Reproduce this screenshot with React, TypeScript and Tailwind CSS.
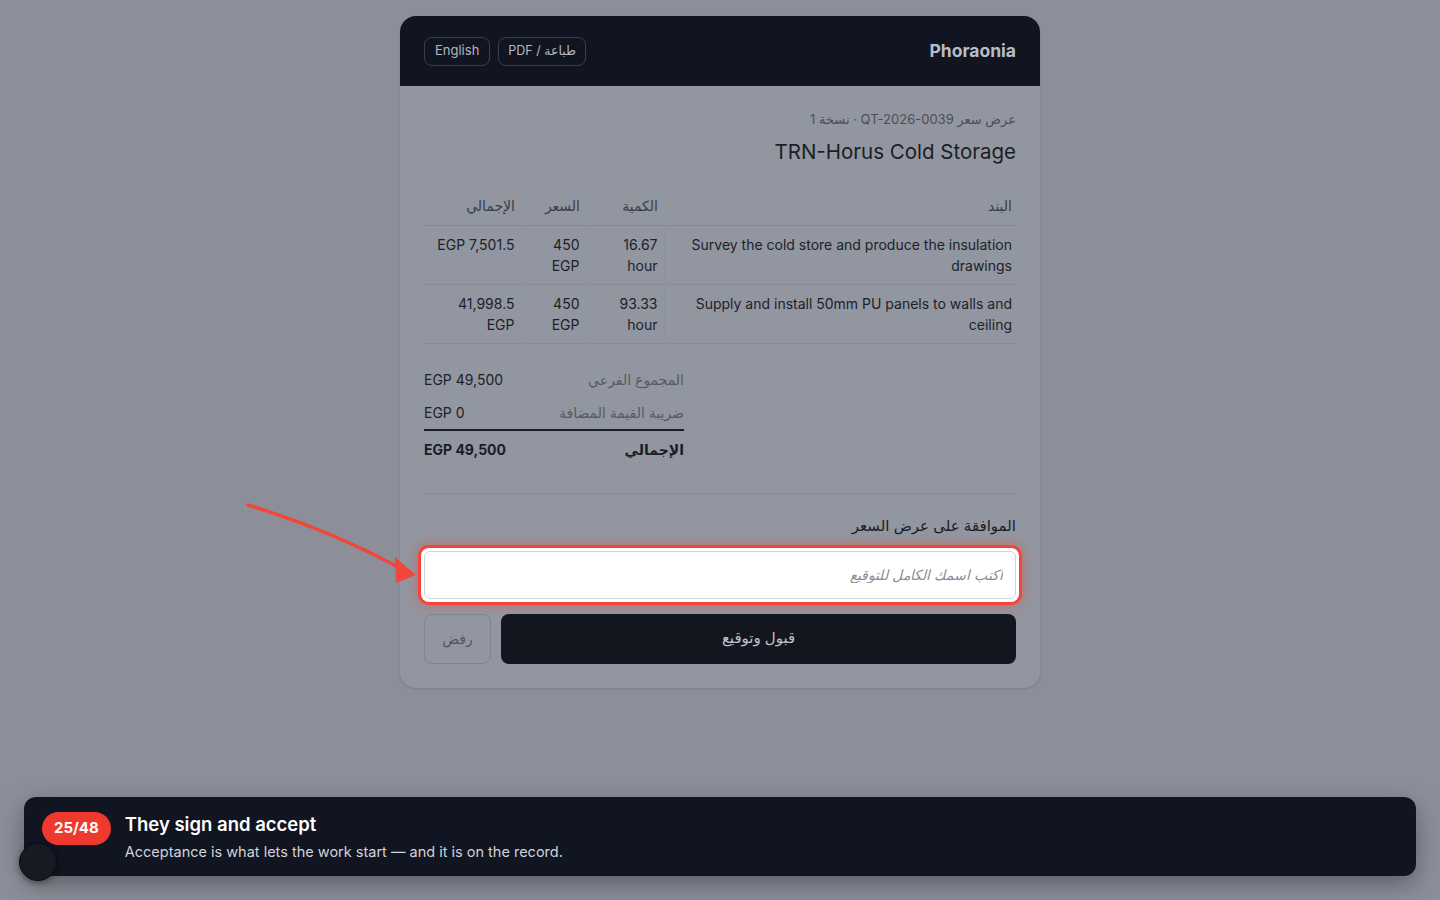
import React from 'react';

const lines = [
  {
    item: 'Survey the cold store and produce the insulation drawings',
    qty: ['16.67', 'hour'],
    price: ['450', 'EGP'],
    total: ['EGP 7,501.5'],
  },
  {
    item: 'Supply and install 50mm PU panels to walls and ceiling',
    qty: ['93.33', 'hour'],
    price: ['450', 'EGP'],
    total: ['41,998.5', 'EGP'],
  },
];

const font = { fontFamily: 'Inter, "DejaVu Sans", "Noto Sans", sans-serif' };

function Stack({ parts }: { parts: string[] }) {
  return (
    <>
      {parts.map((p, i) => (
        <div key={i}>{p}</div>
      ))}
    </>
  );
}

// Red callout arrow pointing at the signature field
function Arrow() {
  return (
    <svg className="absolute left-[240px] top-[495px] pointer-events-none" width="190" height="95" viewBox="0 0 190 95">
      <path d="M8 10 Q 90 35 160 73" fill="none" stroke="#f0473a" strokeWidth="3.5" strokeLinecap="round" />
      <polygon points="176,80 155,62 156,88" fill="#f0473a" />
    </svg>
  );
}

export default function App() {
  return (
    <div className="relative min-h-screen h-[900px] bg-[#8c8f9a] overflow-hidden" style={font}>
      <div className="flex justify-center pt-4">
        <div dir="rtl" className="w-[640px] rounded-2xl overflow-hidden bg-[#9296a0] shadow-sm">
          {/* header */}
          <div className="h-[70px] bg-[#111522] px-6 flex items-center justify-between">
            <div className="text-[17.5px] font-bold text-[#b8bcc4]">Phoraonia</div>
            <div className="flex gap-2">
              <button dir="ltr" className="h-[29px] px-[9px] rounded-lg border border-[#3b3f4c] text-[12.5px] text-[#b4b8c0]">PDF / طباعة</button>
              <button className="h-[29px] px-[10px] rounded-lg border border-[#3b3f4c] text-[13px] text-[#b4b8c0]">English</button>
            </div>
          </div>

          <div className="px-6 pt-[25px] pb-6">
            <div className="text-[13px] text-[#4a4e57] leading-[16px]">عرض سعر QT-2026-0039 · نسخة 1</div>
            <div dir="ltr" className="text-right text-[20.5px] text-[#1b1e26] mt-[12px] leading-[26px]">TRN-Horus Cold Storage</div>

            <table className="w-full mt-[21px] border-collapse text-[14px] text-[#1e2129]">
              <thead>
                <tr className="border-b border-[#858993]">
                  <th className="w-[352px] text-right font-medium text-[#393d46] px-[4px] pt-[9px] pb-[9px]">البند</th>
                  <th className="w-[78px] text-right font-medium text-[#393d46] px-[6px] pt-[9px] pb-[9px]">الكمية</th>
                  <th className="w-[65px] text-right font-medium text-[#393d46] px-[6px] pt-[9px] pb-[9px]">السعر</th>
                  <th className="text-right font-medium text-[#393d46] px-[6px] pt-[9px] pb-[9px]">الإجمالي</th>
                </tr>
              </thead>
              <tbody>
                {lines.map((l, i) => (
                  <tr key={i} className="border-b border-[#888c96] align-top leading-[21px]">
                    <td dir="ltr" className="text-right px-[4px] py-[8px] border-l border-[#8e929c]">{l.item}</td>
                    <td dir="ltr" className="text-right px-[6px] py-[8px] border-l border-[#8e929c]"><Stack parts={l.qty} /></td>
                    <td dir="ltr" className="text-right px-[6px] py-[8px] border-l border-[#8e929c]"><Stack parts={l.price} /></td>
                    <td dir="ltr" className="text-right px-[6px] py-[8px]"><Stack parts={l.total} /></td>
                  </tr>
                ))}
              </tbody>
            </table>

            {/* totals */}
            <div className="flex justify-end mt-[25px]">
              <div className="w-[260px] text-[14px]">
                <div className="flex justify-between h-[33px] items-start">
                  <span className="text-[#565a63]">المجموع الفرعي</span>
                  <span dir="ltr" className="text-[#1e2129]">EGP 49,500</span>
                </div>
                <div className="flex justify-between h-[29px] items-start border-b-2 border-[#1a1d26]">
                  <span className="text-[#565a63]">ضريبة القيمة المضافة</span>
                  <span dir="ltr" className="text-[#1e2129]">EGP 0</span>
                </div>
                <div className="flex justify-between pt-[8px] font-bold text-[#1a1d26]">
                  <span>الإجمالي</span>
                  <span dir="ltr">EGP 49,500</span>
                </div>
              </div>
            </div>

            <div className="border-t border-[#878b95] mt-[33px]" />

            <div className="mt-[21px] text-[15px] text-[#1a1d26]">الموافقة على عرض السعر</div>

            <div className="mt-[7px] -mx-[6px] p-[3px] rounded-[11px] bg-[#f0473a] shadow-[0_0_12px_rgba(240,71,58,0.55)]">
              <div className="p-[3px] rounded-lg bg-white">
                <input
                  className="w-full h-[48px] rounded-md border border-[#d0d3d9] bg-white px-3 text-[14px] italic text-[#1a1d26] placeholder:text-[#8a8d95] outline-none"
                  placeholder="اكتب اسمك الكامل للتوقيع"
                />
              </div>
            </div>

            <div className="flex gap-[10px] mt-[9px]">
              <button className="flex-1 h-[50px] rounded-lg bg-[#13151f] text-[15px] font-medium text-[#c0c3cb]">قبول وتوقيع</button>
              <button className="w-[67px] h-[50px] rounded-lg border border-[#7f838d] text-[14px] text-[#50545d]">رفض</button>
            </div>
          </div>
        </div>
      </div>

      <Arrow />

      {/* walkthrough step bar */}
      <div className="absolute left-6 right-6 bottom-6 h-[79px] rounded-xl bg-[#111421] shadow-[0_8px_24px_rgba(0,0,0,0.35)] flex items-start gap-[14px] pl-[18px] pt-[15px]">
        <div className="h-[33px] px-[12px] rounded-full bg-[#f0392e] text-white font-bold text-[15px] flex items-center">25/48</div>
        <div>
          <div className="text-[18.5px] font-semibold text-white leading-[22px] mt-[1px]">They sign and accept</div>
          <div className="text-[14.5px] text-[#d0d3da] mt-[8px] leading-[18px]">Acceptance is what lets the work start — and it is on the record.</div>
        </div>
      </div>

      {/* dev indicator */}
      <div className="absolute left-[19px] top-[843px] w-[38px] h-[38px] rounded-full bg-[#181a23] border border-[#0c0d12] shadow-[0_2px_6px_rgba(0,0,0,0.4)]" />
    </div>
  );
}
